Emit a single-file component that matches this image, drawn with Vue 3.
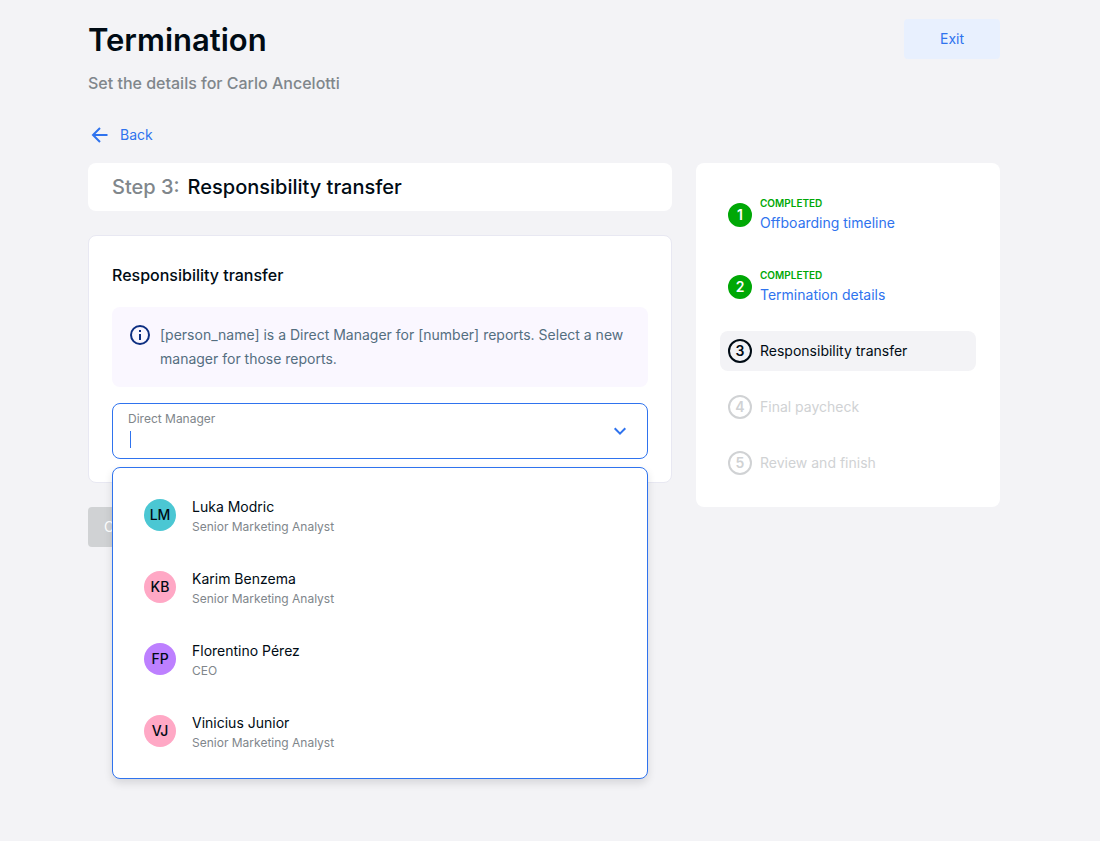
<script setup>
import { ref } from "vue";

const search = ref("");
const open = ref(true);

const steps = [
  { id: 1, title: "Offboarding timeline", status: "done" },
  { id: 2, title: "Termination details", status: "done" },
  { id: 3, title: "Responsibility transfer", status: "current" },
  { id: 4, title: "Final paycheck", status: "todo" },
  { id: 5, title: "Review and finish", status: "todo" },
];

const people = [
  { initials: "LM", name: "Luka Modric", role: "Senior Marketing Analyst", color: "teal" },
  { initials: "KB", name: "Karim Benzema", role: "Senior Marketing Analyst", color: "pink" },
  { initials: "FP", name: "Florentino Pérez", role: "CEO", color: "purple" },
  { initials: "VJ", name: "Vinicius Junior", role: "Senior Marketing Analyst", color: "pink" },
];

const pick = (person) => {
  search.value = person.name;
  open.value = false;
};
</script>

<template>
  <div class="page">
    <header class="header">
      <div>
        <h1>Termination</h1>
        <p class="subtitle">Set the details for Carlo Ancelotti</p>
      </div>
      <button type="button" class="exit">Exit</button>
    </header>

    <a href="#" class="back">
      <svg width="24" height="24" viewBox="0 0 24 24" fill="none">
        <path d="M12 5L5 12L12 19M5 12H19.5" stroke="currentColor" stroke-width="2" />
      </svg>
      Back
    </a>

    <div class="columns">
      <main class="content">
        <h2 class="step-title"><span>Step 3:</span> Responsibility transfer</h2>

        <section class="card">
          <h3>Responsibility transfer</h3>
          <div class="info">
            <svg width="24" height="24" viewBox="0 0 24 24" fill="none">
              <circle cx="12" cy="12" r="9" stroke="currentColor" stroke-width="2" />
              <path d="M11 11H13V17H11ZM11 7H13V9H11Z" fill="currentColor" />
            </svg>
            <p>
              [person_name] is a Direct Manager for [number] reports. Select a new manager for
              those reports.
            </p>
          </div>

          <div class="select">
            <div class="field">
              <div class="field-text">
                <label for="manager">Direct Manager</label>
                <div class="input-wrap" :class="{ empty: !search }">
                  <input id="manager" type="text" v-model="search" autocomplete="off" />
                </div>
              </div>
              <button type="button" class="toggle" aria-label="Show people" @click="open = !open">
                <svg width="24" height="24" viewBox="0 0 24 24" fill="none">
                  <path d="M6.7 9.3L12 14.6L17.3 9.3" stroke="currentColor" stroke-width="2" />
                </svg>
              </button>
            </div>

            <ul v-if="open" class="menu">
              <li v-for="person in people" :key="person.initials">
                <button type="button" class="person" @click="pick(person)">
                  <span class="avatar" :class="person.color">{{ person.initials }}</span>
                  <span class="person-text">
                    <span class="name">{{ person.name }}</span>
                    <span class="role">{{ person.role }}</span>
                  </span>
                </button>
              </li>
            </ul>
          </div>
        </section>

        <button type="button" class="continue" disabled>Continue</button>
      </main>

      <aside class="steps">
        <ol>
          <li v-for="step in steps" :key="step.id" class="step" :class="step.status">
            <span class="number">{{ step.id }}</span>
            <div>
              <div v-if="step.status === 'done'" class="completed">COMPLETED</div>
              <a v-if="step.status === 'done'" href="#">{{ step.title }}</a>
              <span v-else class="label">{{ step.title }}</span>
            </div>
          </li>
        </ol>
      </aside>
    </div>
  </div>
</template>

<style>
body {
  background-color: #f3f3f6;
}
</style>

<style scoped>
.page {
  box-sizing: border-box;
  min-height: 100vh;
  padding: 19px 100px 40px 88px;
  font-family: Inter, "Liberation Sans", sans-serif;
  font-size: 14px;
  line-height: 24px;
  color: #000b14;
}
.page * {
  box-sizing: border-box;
}
h1,
h2,
h3,
p,
ul,
ol {
  margin: 0;
  padding: 0;
}
ul,
ol {
  list-style: none;
}
button,
input {
  font: inherit;
  border: none;
  padding: 0;
  background: none;
}
a {
  color: #2f73ee;
  text-decoration: none;
}
svg {
  display: block;
  flex-shrink: 0;
}

.header {
  display: flex;
  justify-content: space-between;
  align-items: flex-start;
}
h1 {
  font-size: 31px;
  line-height: 42px;
  font-weight: 600;
}
.subtitle {
  margin-top: 10px;
  font-size: 16px;
  font-weight: 500;
  color: #80868b;
}
.exit {
  width: 96px;
  height: 40px;
  border-radius: 4px;
  color: #2f73ee;
  background-color: #e8f0fe;
}
.back {
  display: flex;
  gap: 8px;
  width: fit-content;
  margin-top: 28px;
}

.columns {
  display: grid;
  grid-template-columns: minmax(0, 1fr) 304px;
  align-items: start;
  gap: 24px;
  margin-top: 16px;
}
.content {
  display: flex;
  flex-direction: column;
  gap: 24px;
}
.step-title {
  display: flex;
  gap: 8px;
  padding: 8px 24px;
  border-radius: 8px;
  font-size: 20px;
  line-height: 32px;
  font-weight: 500;
  background-color: #fff;
}
.step-title span {
  color: #80868b;
}

.card {
  padding: 23px;
  border: 1px solid #e8e8f2;
  border-radius: 8px;
  background-color: #fff;
}
h3 {
  font-size: 16px;
  line-height: 32px;
  font-weight: 500;
}
.info {
  display: flex;
  gap: 8px;
  margin: 16px 0;
  padding: 16px;
  border-radius: 8px;
  color: #0d2f81;
  background-color: #faf7ff;
}
.info p {
  color: #546e7f;
}

.select {
  position: relative;
}
.field {
  display: flex;
  align-items: center;
  height: 56px;
  padding: 0 15px;
  border: 1px solid #2f73ee;
  border-radius: 8px;
}
.field-text {
  flex: 1;
}
.field label {
  display: block;
  font-size: 12px;
  line-height: 16px;
  color: #80868b;
}
.input-wrap {
  display: flex;
  align-items: center;
  height: 24px;
  padding-left: 2px;
}
.input-wrap.empty::before {
  content: "";
  width: 1px;
  height: 17px;
  background-color: #2f73ee;
}
input {
  flex: 1;
  outline: none;
}
.empty input {
  caret-color: transparent;
}
.toggle {
  color: #2f73ee;
}

.menu {
  position: absolute;
  top: 64px;
  left: 0;
  right: 0;
  padding: 11px 0;
  border: 1px solid #2f73ee;
  border-radius: 8px;
  background-color: #fff;
  box-shadow: 0 4px 8px rgba(0, 11, 20, 0.12);
}
.person {
  display: flex;
  align-items: center;
  gap: 16px;
  width: 100%;
  height: 72px;
  padding: 0 31px;
  text-align: left;
  color: #000b14;
}
.avatar {
  width: 32px;
  line-height: 32px;
  border-radius: 50%;
  font-weight: 500;
  text-align: center;
}
.teal {
  background-color: #4bc7d3;
}
.pink {
  background-color: #ffa8c5;
}
.purple {
  background-color: #bd80ff;
}
.name,
.role {
  display: block;
}
.role {
  font-size: 12px;
  line-height: 16px;
  color: #80868b;
}

.continue {
  align-self: flex-start;
  height: 40px;
  padding: 0 16px;
  border-radius: 4px;
  color: #fff;
  background-color: #d0d2d4;
}

.steps {
  padding: 24px;
  border-radius: 8px;
  background-color: #fff;
}
.steps ol {
  display: flex;
  flex-direction: column;
  gap: 16px;
}
.step {
  display: flex;
  align-items: center;
  gap: 8px;
  padding: 8px;
  border-radius: 8px;
}
.step a,
.label {
  display: block;
}
.number {
  width: 24px;
  height: 24px;
  border: 2px solid currentColor;
  border-radius: 50%;
  font-weight: 600;
  line-height: 20px;
  text-align: center;
}
.done .number {
  border-color: #00a806;
  color: #fff;
  background-color: #00a806;
}
.completed {
  font-size: 10px;
  line-height: 16px;
  font-weight: 600;
  color: #00a806;
}
.current {
  background-color: #f3f3f6;
}
.todo {
  color: #d0d2d4;
}
</style>
